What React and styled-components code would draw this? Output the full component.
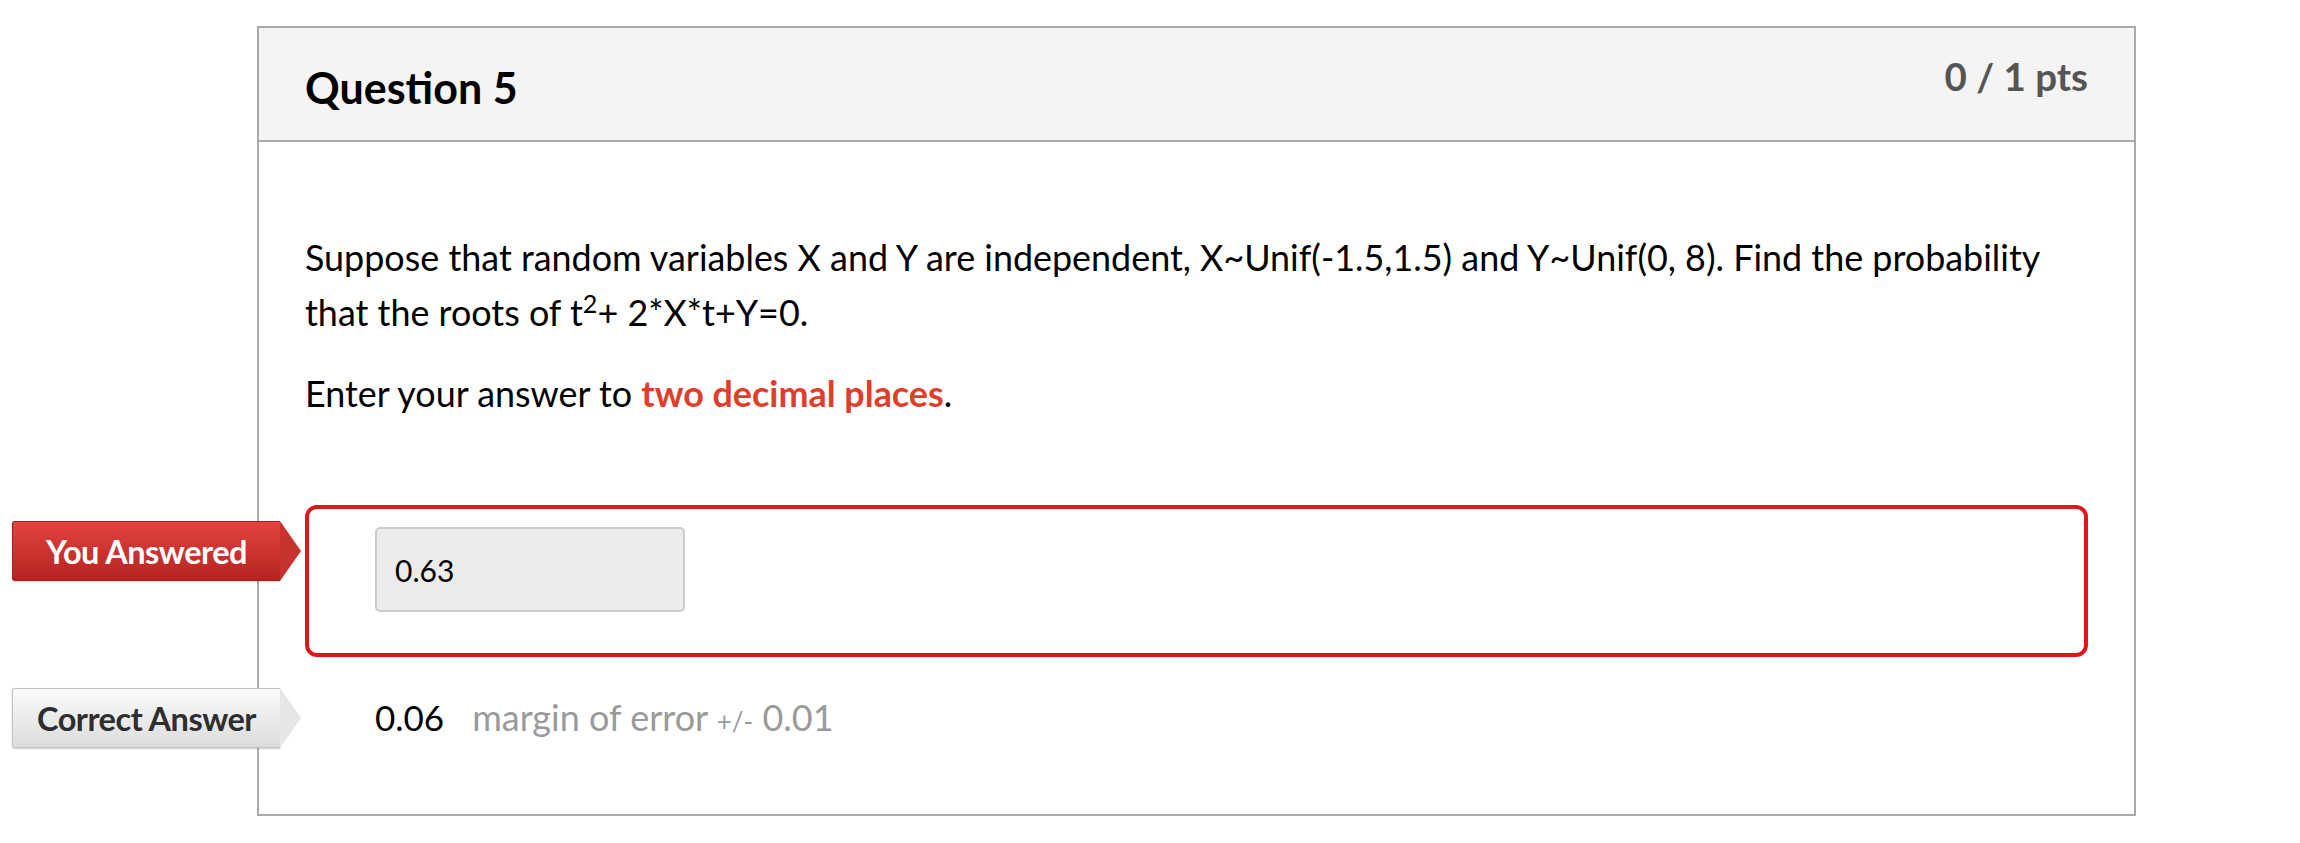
import React from "react";
import styled, { createGlobalStyle } from "styled-components";

const GlobalStyle = createGlobalStyle`
  html, body {
    margin: 0;
    padding: 0;
    background: #ffffff;
    font-family: Lato, "Open Sans", sans-serif;
  }
`;

const Page = styled.div`
  width: 2300px;
  height: 843px;
  padding: 26px 0 0 257px;
  box-sizing: border-box;
  background: #fff;
`;

const Card = styled.div`
  width: 1879px;
  height: 790px;
  box-sizing: border-box;
  border: 2px solid #aaaaaa;
  display: flex;
  flex-direction: column;
`;

const Header = styled.div`
  height: 114px;
  box-sizing: border-box;
  background: #f4f4f4;
  border-bottom: 2px solid #aaaaaa;
  display: flex;
  justify-content: space-between;
  align-items: flex-start;
  padding: 0 46px 0 46px;
`;

const Title = styled.h2`
  margin: 32px 0 0;
  font-size: 43px;
  font-weight: 700;
  color: #000;
  line-height: 56px;
`;

const Points = styled.div`
  margin-top: 23px;
  font-size: 38.5px;
  font-weight: 700;
  color: #555555;
  line-height: 50px;
`;

const Body = styled.div`
  padding: 88px 46px 0 46px;
`;

const Text = styled.p`
  margin: 0 0 26px;
  font-size: 35.9px;
  line-height: 55px;
  color: #000;

  sup {
    font-size: 0.7em;
    line-height: 0;
  }
`;

const Highlight = styled.strong`
  color: #e03e2d;
  font-weight: 700;
`;

const Answers = styled.div`
  margin-top: 84px;
  display: flex;
  flex-direction: column;
`;

const AnswerRow = styled.div`
  position: relative;
  display: flex;
  align-items: ${(p) => (p.$wrong ? "flex-start" : "center")};
  box-sizing: border-box;
  height: ${(p) => p.$height}px;
  padding-left: 66px;
  padding-top: ${(p) => (p.$wrong ? 18 : 0)}px;
  border: ${(p) => (p.$wrong ? "4px solid #e0161b" : "4px solid transparent")};
  border-radius: 12px;
  margin-bottom: ${(p) => p.$gap || 0}px;
`;

const Tag = styled.div`
  position: absolute;
  left: -297px;
  top: ${(p) => p.$top}px;
  width: 268px;
  height: 60px;
  box-sizing: border-box;
  display: flex;
  align-items: center;
  justify-content: center;
  font-size: 32.5px;
  font-weight: 700;
  letter-spacing: -0.5px;
  border-radius: 3px 0 0 3px;
  color: ${(p) => (p.$wrong ? "#fff" : "#2e2e2e")};
  background: ${(p) =>
    p.$wrong
      ? "linear-gradient(#e2443f, #b52320)"
      : "linear-gradient(#fbfbfb, #dcdcdc)"};
  border: ${(p) => (p.$wrong ? "1px solid #a51f1c" : "1px solid #c4c4c4")};
  border-right: none;
  box-shadow: 0 1px 2px rgba(0, 0, 0, 0.2);

  &::after {
    content: "";
    position: absolute;
    right: -21px;
    top: -1px;
    width: 0;
    height: 0;
    border-top: 30px solid transparent;
    border-bottom: 30px solid transparent;
    border-left: 21px solid ${(p) => (p.$wrong ? "#c8322e" : "#e6e6e6")};
  }
`;

const InputBox = styled.div`
  width: 310px;
  height: 85px;
  box-sizing: border-box;
  background: #ececec;
  border: 2px solid #cccccc;
  border-radius: 5px;
  display: flex;
  align-items: center;
  padding-left: 18px;
  font-size: 30px;
  color: #000;
`;

const CorrectValue = styled.span`
  font-size: 35px;
  color: #000;
  margin-right: 28px;
`;

const Margin = styled.span`
  font-size: 36px;
  color: #9a9a9a;

  small {
    font-size: 26px;
  }
`;

export default function App() {
  return (
    <>
      <GlobalStyle />
      <Page>
        <Card>
          <Header>
            <Title>Question 5</Title>
            <Points>0 / 1 pts</Points>
          </Header>
          <Body>
            <Text>
              Suppose that random variables X and Y are independent,
              X~Unif(-1.5,1.5) and Y~Unif(0, 8). Find the probability that the
              roots of t<sup>2</sup>+ 2*X*t+Y=0.
            </Text>
            <Text>
              Enter your answer to <Highlight>two decimal places</Highlight>.
            </Text>
            <Answers>
              <AnswerRow $wrong $height={152} $gap={17}>
                <Tag $wrong $top={12}>You Answered</Tag>
                <InputBox>0.63</InputBox>
              </AnswerRow>
              <AnswerRow $height={86}>
                <Tag $top={10}>Correct Answer</Tag>
                <CorrectValue>0.06</CorrectValue>
                <Margin>
                  margin of error <small>+/-</small> 0.01
                </Margin>
              </AnswerRow>
            </Answers>
          </Body>
        </Card>
      </Page>
    </>
  );
}
